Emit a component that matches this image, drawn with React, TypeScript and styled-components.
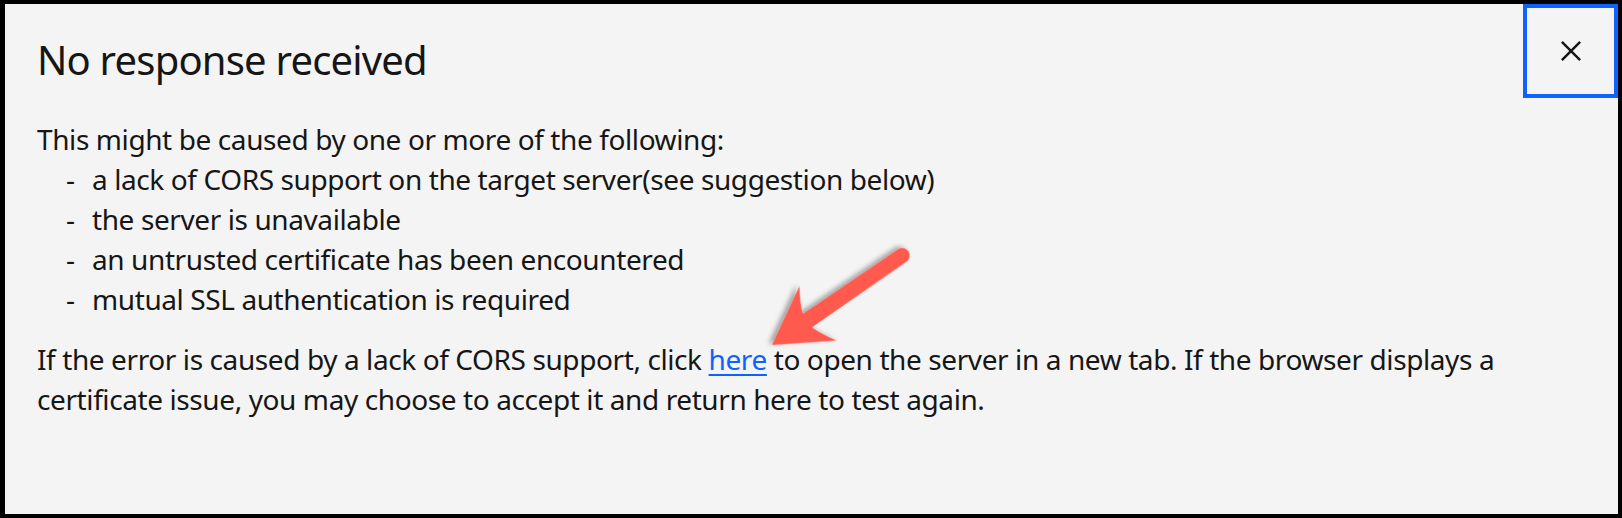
import React from "react";
import styled, { createGlobalStyle } from "styled-components";

const GlobalStyle = createGlobalStyle`
  html, body {
    margin: 0;
    padding: 0;
    background: #000;
  }
`;

const Modal = styled.div`
  position: relative;
  width: 1622px;
  height: 518px;
  box-sizing: border-box;
  border: 4px solid #000;
  border-left-width: 5px;
  background: #f4f4f4;
  color: #161616;
  font-family: "Noto Sans", "Open Sans", sans-serif;
`;

const Header = styled.div`
  display: flex;
  justify-content: space-between;
  align-items: flex-start;
`;

const Title = styled.h2`
  margin: 0;
  padding: 28px 0 0 32px;
  font-size: 40px;
  line-height: 56px;
  font-weight: 400;
  letter-spacing: -0.8px;
`;

const CloseButton = styled.button`
  display: flex;
  align-items: center;
  justify-content: center;
  width: 95px;
  height: 94px;
  box-sizing: border-box;
  border: 4px solid #0f62fe;
  background: transparent;
  padding: 0;
  cursor: pointer;
`;

const Body = styled.div`
  padding: 21px 0 0 32px;
  font-size: 28px;
  line-height: 40px;
  letter-spacing: -0.4px;
`;

const Paragraph = styled.p<{ $gap?: number }>`
  margin: ${({ $gap }) => $gap ?? 0}px 0 0;
  max-width: 1495px;
`;

const List = styled.ul`
  margin: 0;
  padding: 0 0 0 29px;
  list-style: none;
`;

const Item = styled.li`
  display: flex;
`;

const Dash = styled.span`
  width: 26px;
  flex: none;
`;

const Link = styled.a`
  color: #0f62fe;
  text-decoration: underline;
  text-decoration-thickness: 2px;
  text-underline-offset: 4px;
`;

const Annotation = styled.svg`
  position: absolute;
  left: 735px;
  top: 221px;
  pointer-events: none;
  overflow: visible;
`;

const CloseIcon = () => (
  <svg width="40" height="40" viewBox="0 0 16 16" fill="#161616">
    <path d="M12 4.7L11.3 4 8 7.3 4.7 4 4 4.7 7.3 8 4 11.3 4.7 12 8 8.7 11.3 12 12 11.3 8.7 8z" />
  </svg>
);

// red callout arrow, drawn pointing right with its tip at the origin, then rotated
const Arrow = () => (
  <Annotation width="190" height="150" viewBox="0 0 190 150">
    <defs>
      <filter id="arrowShadow" x="-20%" y="-20%" width="140%" height="140%">
        <feDropShadow dx="2" dy="3" stdDeviation="2.5" floodColor="#000" floodOpacity="0.35" />
      </filter>
    </defs>
    <g transform="translate(32 120) rotate(145.5)" filter="url(#arrowShadow)">
      <path
        d="M0 0 L-56 -33 Q-46 -18 -43 -8 L-158 -7.5 A7.5 7.5 0 0 0 -158 7.5 L-43 8 Q-46 18 -56 33 Z"
        fill="#ff5a4d"
      />
    </g>
  </Annotation>
);

const items = [
  "a lack of CORS support on the target server(see suggestion below)",
  "the server is unavailable",
  "an untrusted certificate has been encountered",
  "mutual SSL authentication is required",
];

export default function App() {
  return (
    <>
      <GlobalStyle />
      <Modal>
        <Header>
          <Title>No response received</Title>
          <CloseButton aria-label="Close">
            <CloseIcon />
          </CloseButton>
        </Header>
        <Body>
          <Paragraph>This might be caused by one or more of the following:</Paragraph>
          <List>
            {items.map((item) => (
              <Item key={item}>
                <Dash>-</Dash>
                <span>{item}</span>
              </Item>
            ))}
          </List>
          <Paragraph $gap={20}>
            If the error is caused by a lack of CORS support, click <Link href="#">here</Link> to open the
            server in a new tab. If the browser displays a certificate issue, you may choose to accept it and
            return here to test again.
          </Paragraph>
        </Body>
        <Arrow />
      </Modal>
    </>
  );
}
